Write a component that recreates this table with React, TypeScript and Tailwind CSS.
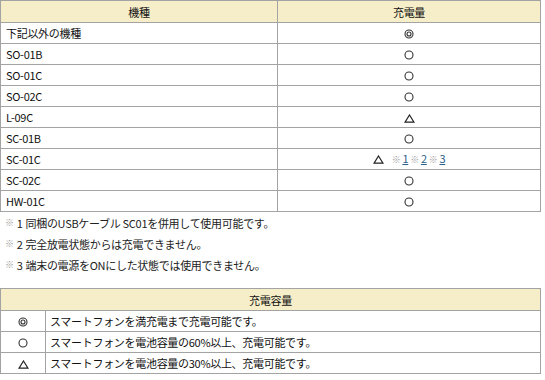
const models: { name: string; mark: string; notes?: boolean }[] = [
  { name: '下記以外の機種', mark: '◎' },
  { name: 'SO-01B', mark: '○' },
  { name: 'SO-01C', mark: '○' },
  { name: 'SO-02C', mark: '○' },
  { name: 'L-09C', mark: '△' },
  { name: 'SC-01B', mark: '○' },
  { name: 'SC-01C', mark: '△', notes: true },
  { name: 'SC-02C', mark: '○' },
  { name: 'HW-01C', mark: '○' },
]

const footnotes = [
  '同梱のUSBケーブル SC01を併用して使用可能です。',
  '完全放電状態からは充電できません。',
  '端末の電源をONにした状態では使用できません。',
]

const levels = [
  { mark: '◎', text: 'スマートフォンを満充電まで充電可能です。' },
  { mark: '○', text: 'スマートフォンを電池容量の60%以上、充電可能です。' },
  { mark: '△', text: 'スマートフォンを電池容量の30%以上、充電可能です。' },
]

const font = { fontFamily: '"Noto Sans CJK JP", "DejaVu Sans", sans-serif' }

function Kome() {
  return <span className="text-[9px] text-[#9a9a9a] mx-[2px]">※</span>
}

// ◎ ○ △ drawn small and crisp like the bitmap glyphs
function Mark({ m }: { m: string }) {
  if (m === '△')
    return (
      <svg width="11" height="9" viewBox="0 0 11 9" className="inline-block align-[-1px]">
        <path d="M5.5 1 L10 8.2 L1 8.2 Z" fill="none" stroke="#222" strokeWidth="1.2" />
      </svg>
    )
  return (
    <svg width="10" height="10" viewBox="0 0 10 10" className="inline-block align-[-1px]">
      <circle cx="5" cy="5" r="4" fill="none" stroke="#333" strokeWidth="1.1" />
      {m === '◎' && <circle cx="5" cy="5" r="2" fill="none" stroke="#333" strokeWidth="1.1" />}
    </svg>
  )
}

export default function App() {
  return (
    <div className="w-[545px] h-[380px] bg-white text-[11px] leading-[14px] text-[#111] tracking-[-0.3px] overflow-hidden" style={font}>
      {/* 機種一覧 */}
      <table className="w-[541px] border-collapse">
        <thead>
          <tr className="bg-[#f6eec8]">
            <th className="h-[22px] p-0 font-normal text-center border border-[#a3a3a3] w-[277px]">機種</th>
            <th className="h-[22px] p-0 font-normal text-center border border-[#a3a3a3]">充電量</th>
          </tr>
        </thead>
        <tbody>
          {models.map((m) => (
            <tr key={m.name}>
              <td className="h-[21px] py-0 px-[5px] border border-[#a3a3a3]">{m.name}</td>
              <td className="h-[21px] p-0 text-center border border-[#a3a3a3]">
                <Mark m={m.mark} />
                {m.notes && (
                  <span className="ml-[6px]">
                    <Kome />
                    <a className="text-[#2b5f87] underline">1</a>
                    <Kome />
                    <a className="text-[#2b5f87] underline">2</a>
                    <Kome />
                    <a className="text-[#2b5f87] underline">3</a>
                  </span>
                )}
              </td>
            </tr>
          ))}
        </tbody>
      </table>

      {/* 注釈 */}
      <div className="flex flex-col pl-[5px]">
        {footnotes.map((t, i) => (
          <div key={i} className="h-[21px] flex items-center text-[#222]">
            <span className="text-[9px] text-[#9a9a9a]">※</span>
            <span className="mx-[3px]">{i + 1}</span>
            <span>{t}</span>
          </div>
        ))}
      </div>

      {/* 充電容量 */}
      <table className="w-[541px] border-collapse mt-[13px]">
        <thead>
          <tr className="bg-[#f6eec8]">
            <th colSpan={2} className="h-[22px] p-0 font-normal text-center border border-[#a3a3a3]">充電容量</th>
          </tr>
        </thead>
        <tbody>
          {levels.map((l) => (
            <tr key={l.mark}>
              <td className="h-[21px] p-0 w-[45px] text-center border border-[#a3a3a3]">
                <Mark m={l.mark} />
              </td>
              <td className="h-[21px] py-0 px-[4px] border border-[#a3a3a3]">{l.text}</td>
            </tr>
          ))}
        </tbody>
      </table>
    </div>
  )
}
